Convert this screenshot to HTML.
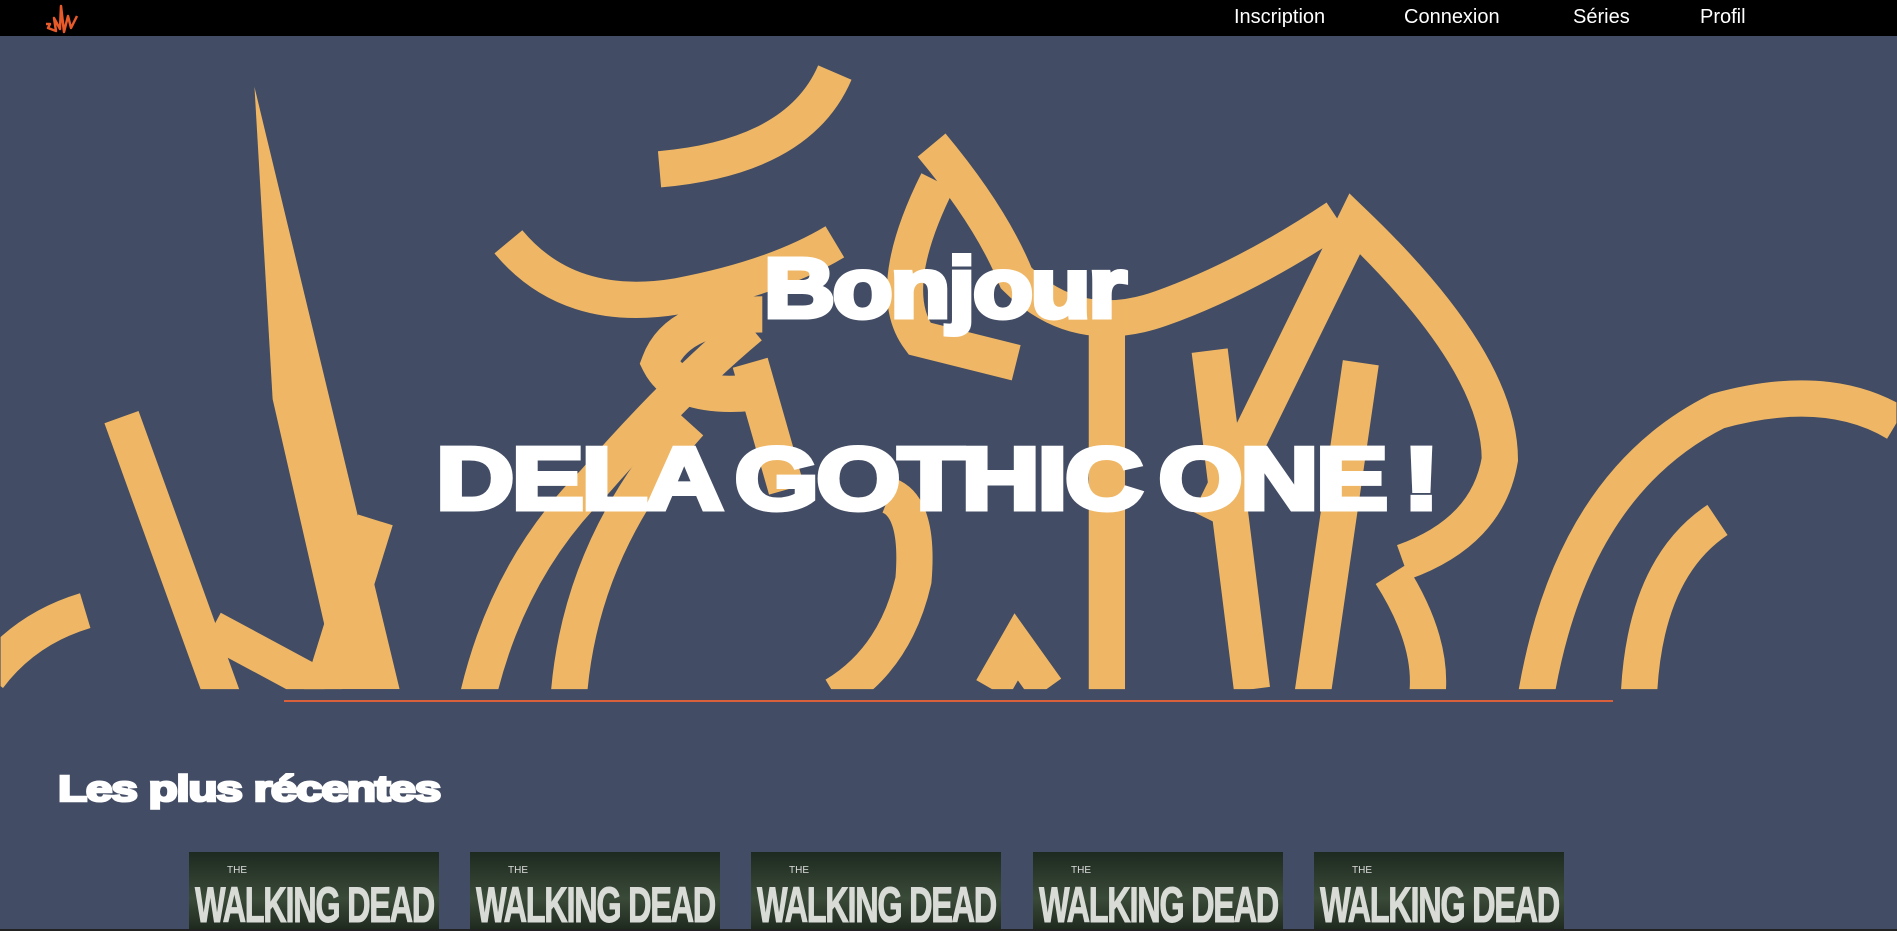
<!DOCTYPE html>
<html><head><meta charset="utf-8"><style>
html,body{margin:0;padding:0;width:1897px;height:931px;overflow:hidden;background:#424c64;font-family:"Liberation Sans",sans-serif;position:relative}
nav{position:absolute;top:0;left:0;width:1897px;height:36px;background:#000}
nav a{position:absolute;top:6px;color:#fff;font-size:20px;text-decoration:none}
.t{position:absolute;color:#fff;font-weight:900;white-space:nowrap;transform-origin:0 0;letter-spacing:-2px;-webkit-text-stroke:5px #fff}
.th{position:absolute;top:852px;width:250px;height:77px;background:linear-gradient(#1d2a20,#3a4a38 60%,#1f2a1f);overflow:hidden}
.th span{position:absolute;left:6px;top:24px;color:#d9dcd6;font:bold 50px "Liberation Sans",sans-serif;transform:scaleX(.65);transform-origin:0 0;letter-spacing:-2px;white-space:nowrap;-webkit-text-stroke:1px #d9dcd6}
.th i{position:absolute;left:38px;top:13px;color:#ddd;font:10px "Liberation Sans";font-style:normal}
</style></head><body>
<svg width="1897" height="931" viewBox="0 0 1568 770" style="position:absolute;left:0;top:0">
<defs><clipPath id="c"><rect x="0" y="30" width="1568" height="540"/></clipPath></defs>
<g clip-path="url(#c)" fill="none" stroke="#efb765" stroke-width="30">
<path d="M-10 560 Q20 520 70 505"/>
<path d="M100 345 L185 580"/>
<path d="M175 520 L268 570"/>
<path d="M265 575 L310 430"/>
<polygon fill="#efb765" stroke="none" points="210,72 330,570 280,570 225,330"/>
<path d="M395 575 Q420 470 490 400 Q560 320 620 270"/>
<path d="M470 575 Q480 450 570 350"/>
<path d="M420 200 Q470 260 560 245 Q640 230 690 200"/>
<path d="M545 140 Q660 130 690 60"/>
<path d="M630 260 Q560 260 545 300 Q560 330 620 325"/>
<path d="M775 150 Q730 240 760 280 L840 300"/>
<path d="M770 120 Q820 180 840 230 Q890 280 960 255 Q1030 230 1105 180"/>
<path d="M620 300 L650 405"/>
<path d="M735 410 Q760 420 755 480 Q740 545 690 575"/>
<path d="M915 250 L915 575"/>
<path d="M1000 290 L1035 570"/>
<path d="M1000 430 L1120 185 Q1240 300 1240 380 Q1230 440 1160 465"/>
<path d="M1125 300 L1085 575"/>
<path d="M1150 475 Q1185 530 1180 575"/>
<path d="M1270 575 Q1300 400 1420 340 Q1510 315 1568 350"/>
<path d="M1355 575 Q1360 470 1420 430"/>
<path d="M820 570 L840 535 L865 570"/>
</g>
</svg>
<nav>
<svg style="position:absolute;left:44px;top:4px" width="36" height="30" viewBox="0 0 36 30"><path d="M2 20 L6 20 L4 24 L12 27 L10 14 L16 25 L17 2 L20 28 L24 12 L27 24 L33 12" fill="none" stroke="#e95a2a" stroke-width="2.5" stroke-linejoin="round"/></svg>
<a style="left:1234px">Inscription</a>
<a style="left:1404px">Connexion</a>
<a style="left:1573px">Séries</a>
<a style="left:1700px">Profil</a>
</nav>
<div class="t" style="left:764px;top:240px;font-size:84px;transform:scaleX(1.17)">Bonjour</div>
<div class="t" style="left:436px;top:428px;font-size:88px;transform:scaleX(1.23);word-spacing:-8px">DELA GOTHIC ONE !</div>
<div style="position:absolute;left:284px;top:700px;width:1329px;height:2px;background:#d9603a"></div>
<div class="t" style="left:58px;top:768px;font-size:36px;transform:scaleX(1.33);-webkit-text-stroke:2.5px #fff;letter-spacing:-1px">Les plus récentes</div>
<div class="th" style="left:189px"><i>THE</i><span>WALKING DEAD</span></div>
<div class="th" style="left:470px"><i>THE</i><span>WALKING DEAD</span></div>
<div class="th" style="left:751px"><i>THE</i><span>WALKING DEAD</span></div>
<div class="th" style="left:1033px"><i>THE</i><span>WALKING DEAD</span></div>
<div class="th" style="left:1314px"><i>THE</i><span>WALKING DEAD</span></div>
<div style="position:absolute;left:0;top:929px;width:1897px;height:2px;background:#222"></div>
</body></html>
